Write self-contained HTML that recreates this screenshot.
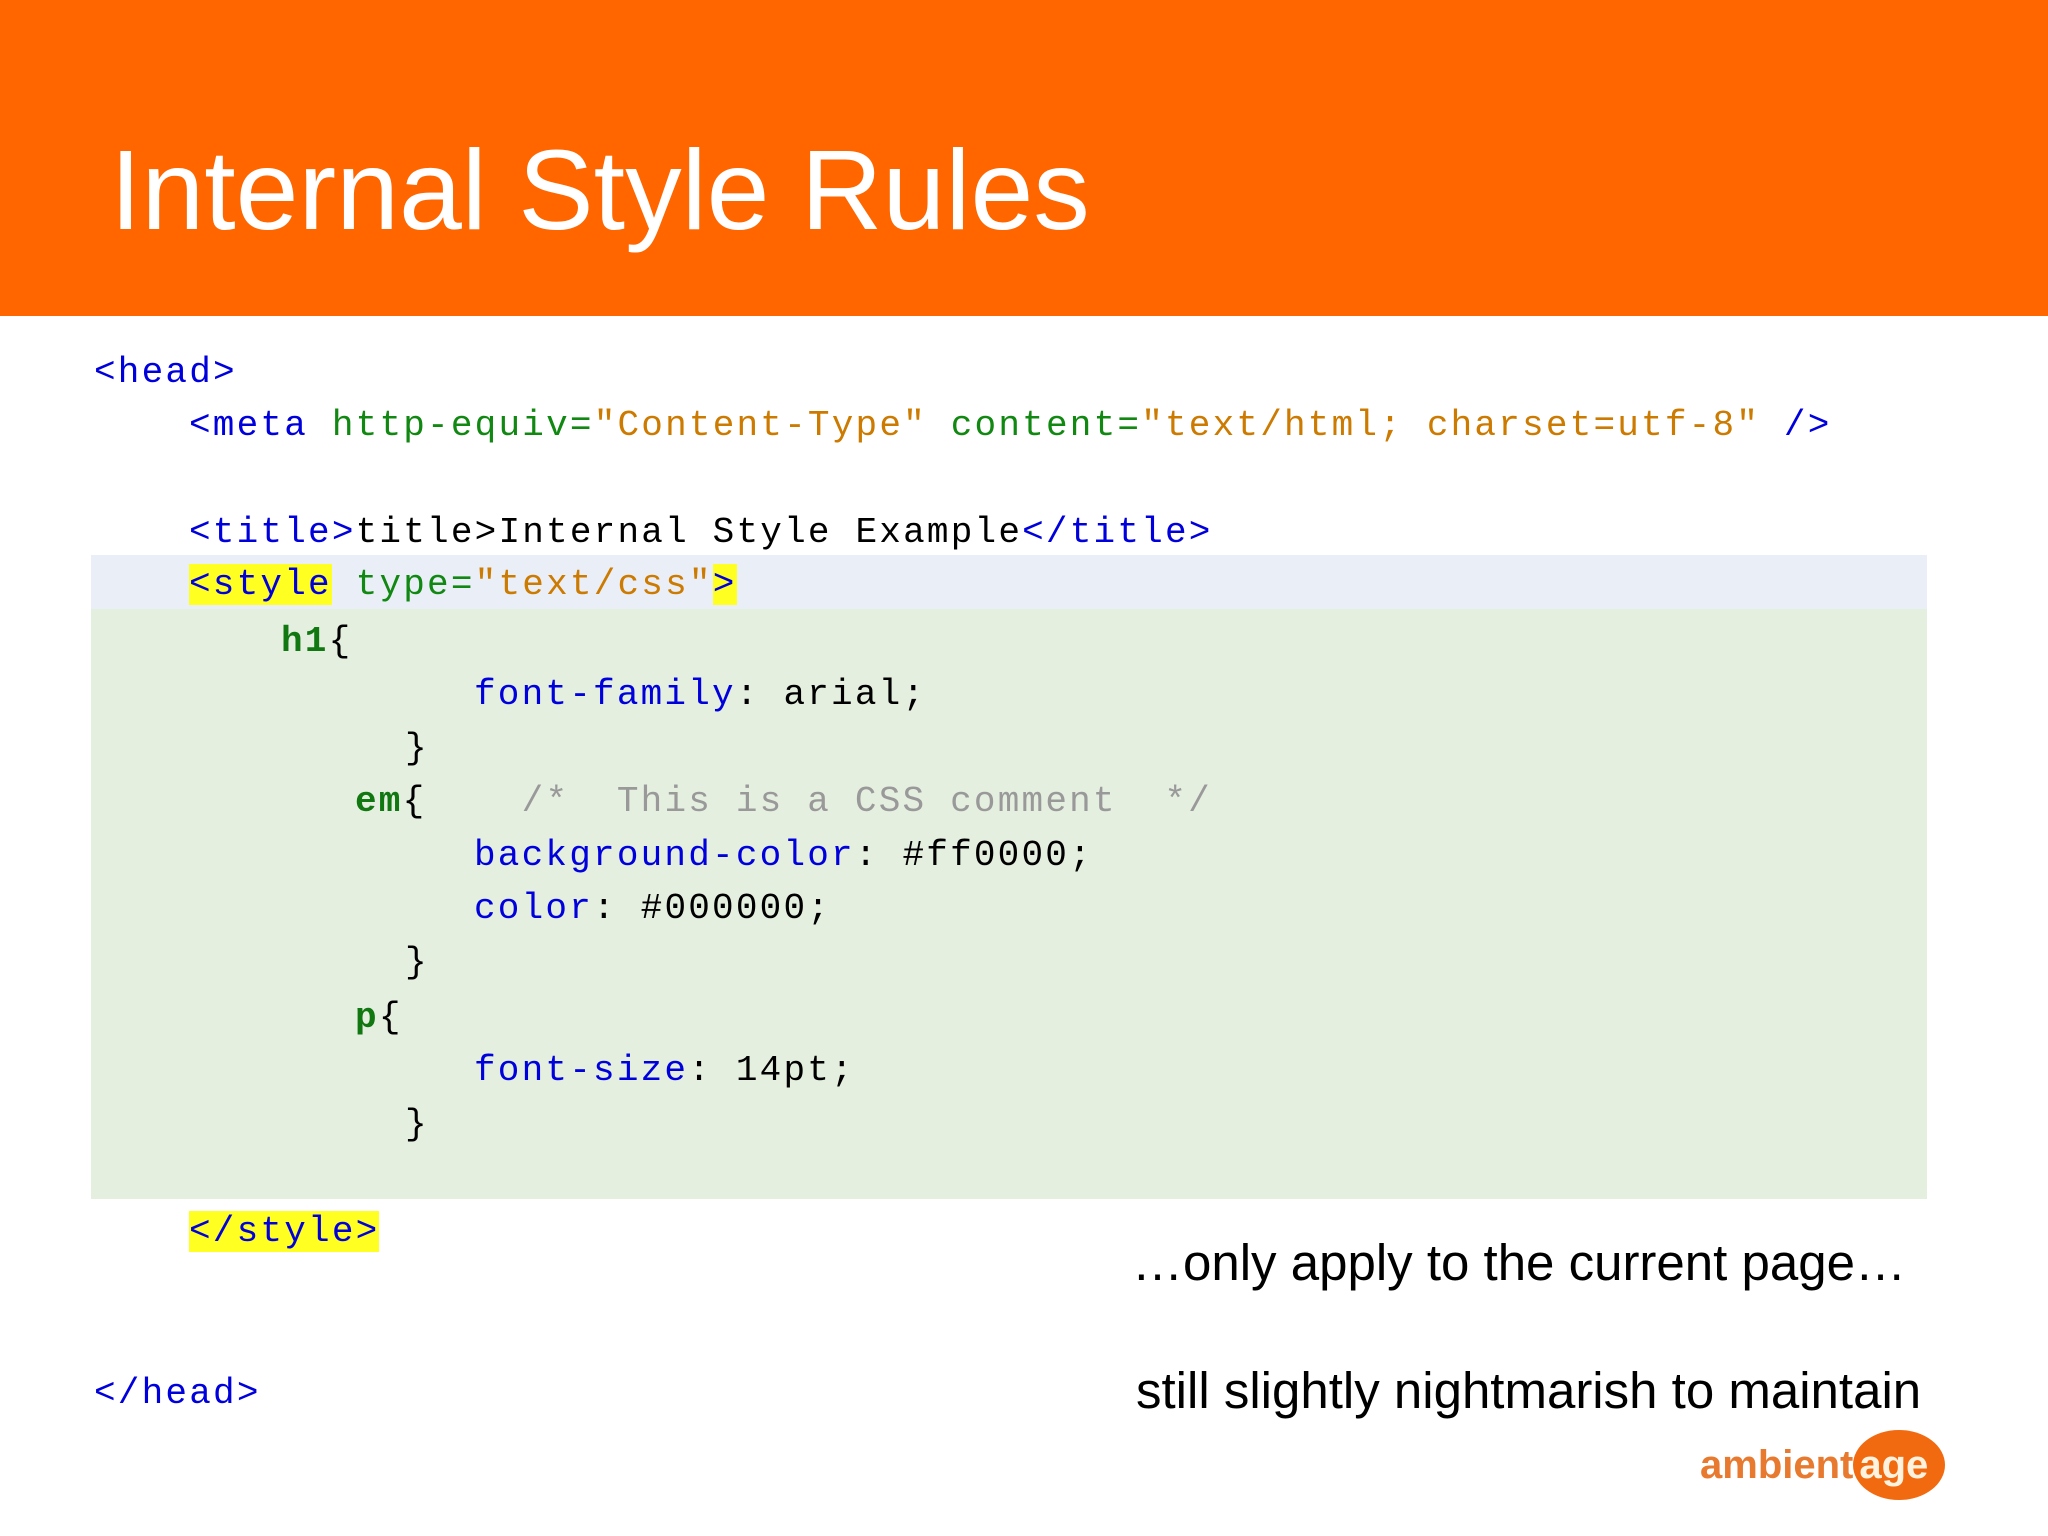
<!DOCTYPE html>
<html><head><meta charset="utf-8"><style>
body{margin:0;width:2048px;height:1536px;position:relative;background:#fff;overflow:hidden}
#hd{position:absolute;left:0;top:0;width:2048px;height:316px;background:#ff6600}
#t{position:absolute;left:110px;top:120px;font:113px "Liberation Sans",sans-serif;color:#fff;line-height:140px;white-space:nowrap}
.bg{position:absolute}
.l{position:absolute;font-family:"Liberation Mono",monospace;font-size:36px;letter-spacing:2.2px;line-height:54px;height:54px;white-space:pre;color:#000}
.b{color:#0000dd}.g{color:#118811}.o{color:#cc7a00}.k{color:#000}.c{color:#999}.gb{color:#117711;font-weight:bold}
.y{background:#ffff22}
.r{position:absolute;font:51px "Liberation Sans",sans-serif;color:#000;white-space:nowrap;line-height:56px}
</style></head><body>
<div id="hd"></div>
<div id="t">Internal Style Rules</div>
<div class="bg" style="left:91px;top:555px;width:1836px;height:54px;background:#e9eef7"></div>
<div class="bg" style="left:91px;top:609px;width:1836px;height:590px;background:#e5efe0"></div>

<div class="l b" style="left:94px;top:346px">&lt;head&gt;</div>
<div class="l" style="left:189px;top:399px"><span class="b">&lt;meta</span> <span class="g">http-equiv=</span><span class="o">"Content-Type"</span> <span class="g">content=</span><span class="o">"text/html; charset=utf-8"</span> <span class="b">/&gt;</span></div>
<div class="l" style="left:189px;top:506px"><span class="b">&lt;title&gt;</span>title&gt;Internal Style Example<span class="b">&lt;/title&gt;</span></div>
<div class="l" style="left:189px;top:558px"><span class="b y">&lt;style</span> <span class="g">type=</span><span class="o">"text/css"</span><span class="b y">&gt;</span></div>
<div class="l" style="left:281px;top:615px"><span class="gb">h1</span>{</div>
<div class="l" style="left:474px;top:668px"><span class="b">font-family</span>: arial;</div>
<div class="l" style="left:405px;top:722px">}</div>
<div class="l" style="left:355px;top:775px"><span class="gb">em</span>{    <span class="c">/*  This is a CSS comment  */</span></div>
<div class="l" style="left:474px;top:829px"><span class="b">background-color</span>: #ff0000;</div>
<div class="l" style="left:474px;top:882px"><span class="b">color</span>: #000000;</div>
<div class="l" style="left:405px;top:936px">}</div>
<div class="l" style="left:355px;top:991px"><span class="gb">p</span>{</div>
<div class="l" style="left:474px;top:1044px"><span class="b">font-size</span>: 14pt;</div>
<div class="l" style="left:405px;top:1098px">}</div>
<div class="l" style="left:189px;top:1205px"><span class="b y">&lt;/style&gt;</span></div>
<div class="l b" style="left:94px;top:1367px">&lt;/head&gt;</div>

<div class="r" style="left:1132px;top:1235px">…only apply to the current page…</div>
<div class="r" style="left:1136px;top:1363px">still slightly nightmarish to maintain</div>

<div style="position:absolute;left:1853px;top:1430px;width:92px;height:70px;border-radius:50%;background:#f26a10"></div>
<div style="position:absolute;left:1700px;top:1440px;font:bold 40px 'Liberation Sans',sans-serif;color:#e87a30;white-space:nowrap;line-height:50px">ambient<span style="color:#fff3e0;margin-left:6px">age</span></div>
</body></html>
